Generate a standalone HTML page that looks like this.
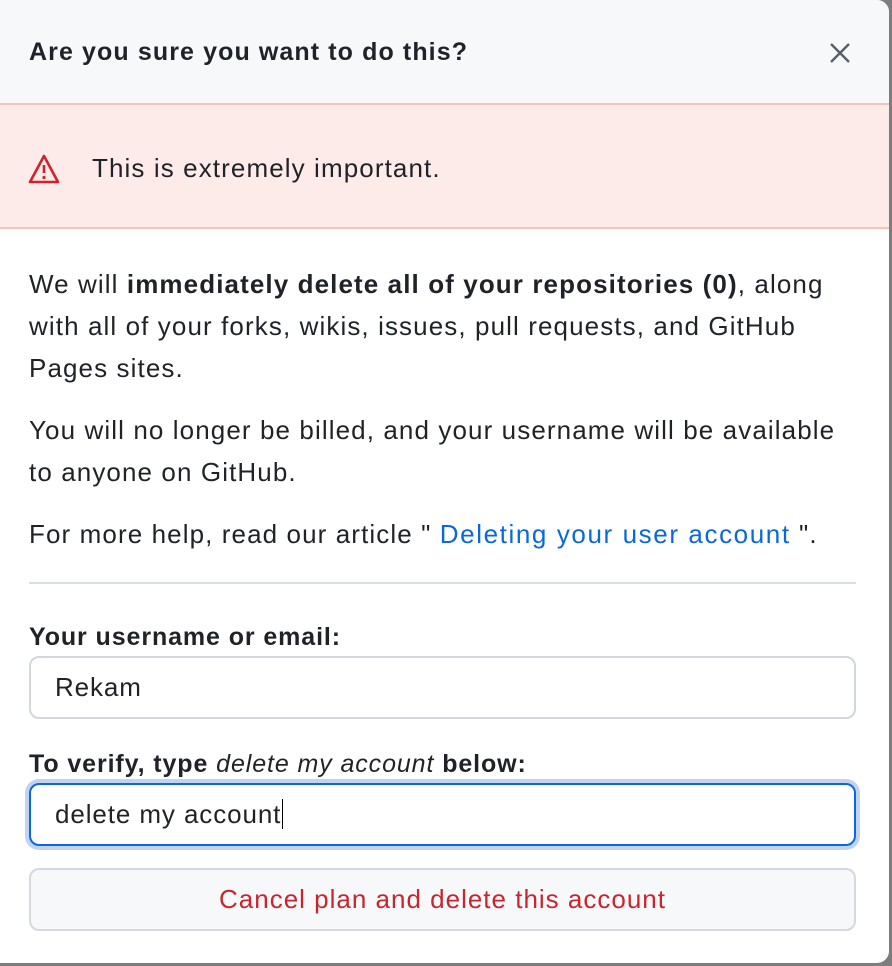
<!DOCTYPE html>
<html><head><style>
html,body{margin:0;padding:0;background:#7d7d7d;width:892px;height:966px;overflow:hidden}
*{box-sizing:border-box}
.d{position:absolute;left:0;top:0;width:889px;height:963px;background:#fff;border-radius:0 12px 12px 0;overflow:hidden;font-family:"Liberation Sans",Arial,sans-serif;color:#1f2328}
.h{height:105px;background:#f6f8fa;border-bottom:2px solid #f5c2c0;position:relative}
.h .t{position:absolute;left:29px;top:38px;font-size:25px;font-weight:bold;letter-spacing:1.1px}
.h .x{position:absolute;left:829px;top:42px}
.f{height:124px;background:#fdebe9;border-bottom:2px solid #f5c2c0;position:relative}
.f .m{position:absolute;left:92px;top:48px;font-size:26px;letter-spacing:1.1px}
.b{padding:0 33px 0 29px;font-size:26px;line-height:42px;letter-spacing:1.1px}
.b p{margin:0}
a{color:#0969da;text-decoration:none}
hr{border:0;border-top:2px solid #d8dee4;margin:27px 0 0 0}
label{display:block;font-weight:bold;font-size:25px;line-height:30px;letter-spacing:0.9px}
.in{height:63px;border:2px solid #d0d7de;border-radius:10px;font-size:26px;padding:0 24px;line-height:59px;letter-spacing:0.9px}
.btn{height:63px;border:2px solid #d5d8dc;border-radius:10px;background:#f6f8fa;color:#c9252f;text-align:center;font-size:26px;line-height:59px;letter-spacing:1px}
</style></head><body>
<div class="d">
<div class="h"><div class="t">Are you sure you want to do this?</div>
<svg class="x" width="22" height="22" viewBox="0 0 22 22"><path d="M2 2L20 20M20 2L2 20" stroke="#57606a" stroke-width="2.4" fill="none"/></svg></div>
<div class="f">
<svg style="position:absolute;left:28px;top:48px" width="32" height="32" viewBox="0 0 32 32"><path d="M16 3L30 29H2Z" stroke="#cf222e" stroke-width="2.6" fill="none" stroke-linejoin="round"/><path d="M16 12v8" stroke="#cf222e" stroke-width="2.6"/><circle cx="16" cy="24.5" r="1.6" fill="#cf222e"/></svg>
<div class="m">This is extremely important.</div></div>
<div class="b">
<p style="margin-top:34px">We will <b>immediately delete all of your repositories (0)</b>, along with all of your forks, wikis, issues, pull requests, and GitHub Pages sites.</p>
<p style="margin-top:20px">You will no longer be billed, and your username will be available to anyone on GitHub.</p>
<p style="margin-top:20px">For more help, read our article " <a style="letter-spacing:1.6px">Deleting your user account</a> ".</p>
<hr>
<label style="margin-top:38px">Your username or email:</label>
<div class="in" style="margin-top:4px">Rekam</div>
<label style="margin-top:30px">To verify, type <i style="font-weight:normal">delete my account</i> below:</label>
<div class="in" style="margin-top:4px;border-color:#0969da;box-shadow:0 0 0 4px #c1d3f1">delete my account<span style="border-left:1.5px solid #000;margin-left:1px"></span></div>
<div class="btn" style="margin-top:22px">Cancel plan and delete this account</div>
</div>
</div>
</body></html>
